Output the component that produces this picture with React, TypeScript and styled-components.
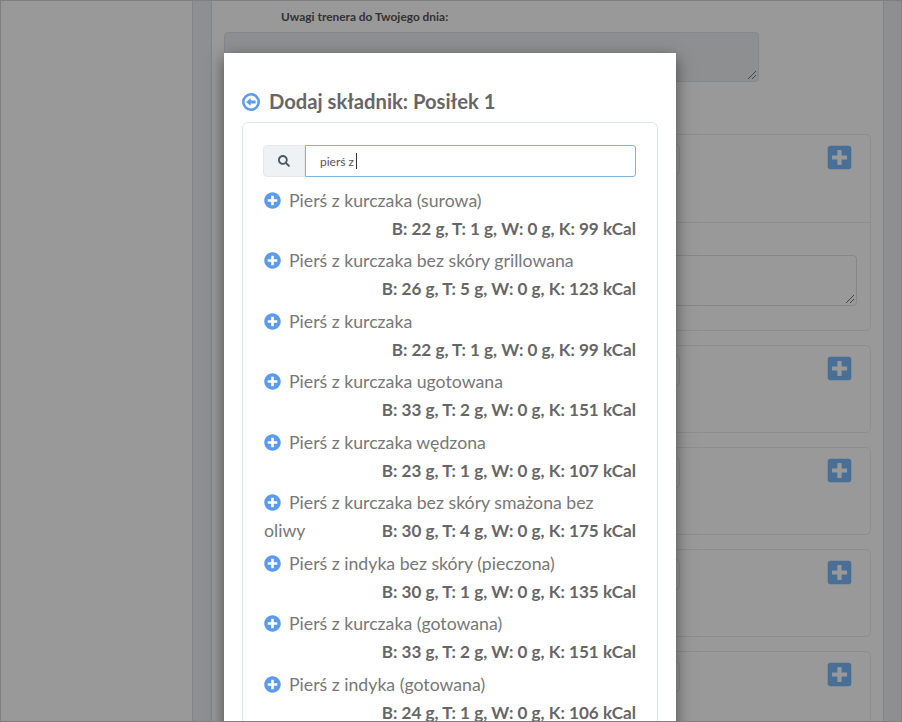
import React from "react";
import styled, { createGlobalStyle } from "styled-components";
import { FaPlusCircle, FaPlusSquare, FaSearch } from "react-icons/fa";

const Global = createGlobalStyle`
  html, body { margin: 0; padding: 0; background: #fff; }
  * { box-sizing: border-box; }
`;

const Frame = styled.div`
  position: relative;
  width: 902px;
  height: 722px;
  border: 1px solid #7f7f7f;
  overflow: hidden;
  font-family: "Lato", "Liberation Sans", sans-serif;
  color: #676a6c;
  background: #fff;
`;
const Page = styled.div`
  display: grid;
  grid-template-columns: 191px 19px 672px 18px;
  height: 100%;
`;
const Sidebar = styled.div`
  background: #fff;
`;
const Gutter = styled.div`
  background: #ebeef0;
  border-left: 1px solid #d8dcdf;
`;
const Main = styled.main`
  background: #fff;
  border-left: 1px solid #d8dcdf;
  padding: 0 12px;
`;
const NoteLabel = styled.div`
  font-size: 11.9px;
  font-weight: 700;
  line-height: 16px;
  padding: 8px 0 0 57px;
  color: #555;
`;
const NoteArea = styled.div`
  position: relative;
  width: 535px;
  height: 50px;
  margin-top: 7px;
  background: #ebeef0;
  border: 1px solid #dde3e6;
  border-radius: 4px;
`;
const Grip = styled.svg`
  position: absolute;
  right: 1px;
  bottom: 1px;
  width: 10px;
  height: 10px;
`;
const Cards = styled.div`
  display: flex;
  flex-direction: column;
  gap: 14px;
  margin-top: 52px;
  width: 647px;
`;
const Card = styled.section`
  border: 1px solid #ececec;
  border-radius: 5px;
  flex: none;
`;
const CardHead = styled.div`
  display: flex;
  justify-content: flex-end;
  height: 86px;
  padding: 9px 17px 0 0;
`;
const SmallInput = styled.div`
  width: 400px;
  height: 31px;
  border: 1px solid #e5e6e7;
  border-radius: 4px;
  margin-right: 146px;
`;
const AddButton = styled.span`
  display: block;
  height: 27px;
  color: #7bb9fb;
  font-size: 27px;
  line-height: 0;
`;
const CardBody = styled.div`
  height: 108px;
  margin-top: 1px;
  border-top: 1px solid #ececec;
  padding: 32px 13px 0 0;
`;
const CardArea = styled(NoteArea)`
  width: 500px;
  height: 51px;
  margin: 0 0 0 auto;
  background: #fff;
  border-color: #e2e2e2;
`;
const Backdrop = styled.div`
  position: absolute;
  inset: 0;
  background: rgba(0, 0, 0, 0.4);
`;
const Modal = styled.div`
  position: absolute;
  left: 223px;
  top: 52px;
  width: 452px;
  height: 720px;
  background: #fff;
  box-shadow: 0 5px 15px rgba(0, 0, 0, 0.5);
  padding: 36px 18px 0 18px;
`;
const Title = styled.h2`
  display: flex;
  align-items: center;
  gap: 9px;
  margin: 0;
  height: 24px;
  font-size: 20.2px;
  font-weight: 700;
  color: #666;
`;
const BackIcon = styled.svg`
  flex: none;
  width: 18px;
  height: 18px;
  position: relative;
  top: 1px;
`;
const Panel = styled.div`
  margin-top: 9px;
  height: 640px;
  border: 1px solid #dde6ec;
  border-radius: 6px;
  padding: 22px 21px 0 20px;
`;
const SearchGroup = styled.div`
  display: flex;
  height: 32px;
`;
const SearchAddon = styled.span`
  display: flex;
  width: 42px;
  align-items: center;
  justify-content: center;
  background: #eff2f4;
  border: 1px solid #e5e9ec;
  border-radius: 4px 0 0 4px;
  color: #495a68;
  font-size: 12px;
`;
const SearchField = styled.div`
  flex: 1;
  display: flex;
  align-items: center;
  padding-left: 14px;
  border: 1px solid #7fb2df;
  border-radius: 0 3px 3px 0;
  font-size: 12px;
  color: #555;
`;
const Caret = styled.span`
  width: 1px;
  height: 16px;
  margin-left: 2px;
  background: #333;
`;
const Results = styled.ul`
  list-style: none;
  margin: 9.5px 0 0 1px;
  padding: 0;
  width: 372px;
`;
const Row = styled.li`
  display: flow-root;
  font-size: 17.7px;
  line-height: 28px;
  margin-bottom: 4.5px;
  color: #777;
`;
const RowIcon = styled.span`
  display: inline-block;
  vertical-align: -2px;
  width: 25px;
  color: #5b9bee;
  font-size: 17px;
  line-height: 16px;
`;
const Macros = styled.span`
  float: right;
  font-size: 17.1px;
  font-weight: 700;
  color: #666;
`;

const items = [
  ["Pierś z kurczaka (surowa)", "B: 22 g, T: 1 g, W: 0 g, K: 99 kCal"],
  ["Pierś z kurczaka bez skóry grillowana", "B: 26 g, T: 5 g, W: 0 g, K: 123 kCal"],
  ["Pierś z kurczaka", "B: 22 g, T: 1 g, W: 0 g, K: 99 kCal"],
  ["Pierś z kurczaka ugotowana", "B: 33 g, T: 2 g, W: 0 g, K: 151 kCal"],
  ["Pierś z kurczaka wędzona", "B: 23 g, T: 1 g, W: 0 g, K: 107 kCal"],
  ["Pierś z kurczaka bez skóry smażona bez oliwy", "B: 30 g, T: 4 g, W: 0 g, K: 175 kCal"],
  ["Pierś z indyka bez skóry (pieczona)", "B: 30 g, T: 1 g, W: 0 g, K: 135 kCal"],
  ["Pierś z kurczaka (gotowana)", "B: 33 g, T: 2 g, W: 0 g, K: 151 kCal"],
  ["Pierś z indyka (gotowana)", "B: 24 g, T: 1 g, W: 0 g, K: 106 kCal"],
];

const ResizeGrip = () => (
  <Grip viewBox="0 0 10 10">
    <path d="M1 9 9 1M5 9 9 5" stroke="#777" strokeWidth="1" fill="none" />
  </Grip>
);

const MealCard = ({ withNotes }: { withNotes?: boolean }) => (
  <Card>
    <CardHead>
      <SmallInput />
      <AddButton><FaPlusSquare /></AddButton>
    </CardHead>
    {withNotes && (
      <CardBody>
        <CardArea><ResizeGrip /></CardArea>
      </CardBody>
    )}
  </Card>
);

export default function App() {
  return (
    <Frame>
      <Global />
      <Page>
        <Sidebar />
        <Gutter />
        <Main>
          <NoteLabel>Uwagi trenera do Twojego dnia:</NoteLabel>
          <NoteArea><ResizeGrip /></NoteArea>
          <Cards>
            <MealCard withNotes />
            <MealCard />
            <MealCard />
            <MealCard />
            <MealCard />
          </Cards>
        </Main>
        <Gutter />
      </Page>
      <Backdrop />
      <Modal>
        <Title>
          <BackIcon viewBox="0 0 18 18">
            <circle cx="9" cy="9" r="7.7" fill="none" stroke="#5b9bee" strokeWidth="2.6" />
            <path d="M4.2 9 8.6 5V7.5H13.6V10.5H8.6V13Z" fill="#5b9bee" />
          </BackIcon>
          Dodaj składnik: Posiłek 1
        </Title>
        <Panel>
          <SearchGroup>
            <SearchAddon><FaSearch /></SearchAddon>
            <SearchField>pierś z<Caret /></SearchField>
          </SearchGroup>
          <Results>
            {items.map(([name, macros]) => (
              <Row key={name}>
                <RowIcon><FaPlusCircle /></RowIcon>
                {name}
                <Macros>{macros}</Macros>
              </Row>
            ))}
          </Results>
        </Panel>
      </Modal>
    </Frame>
  );
}
